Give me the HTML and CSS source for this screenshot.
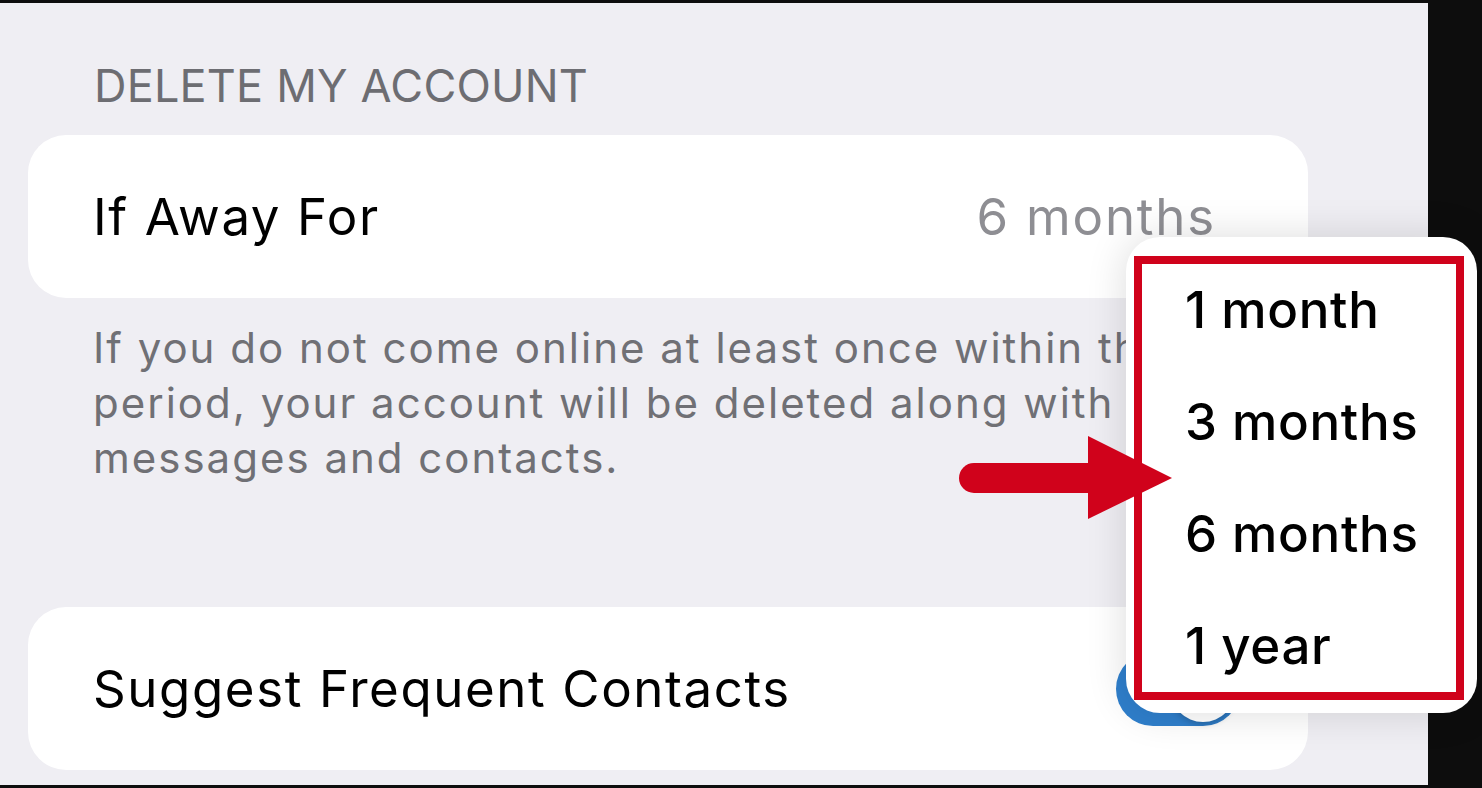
FILE: index.html
```html
<!DOCTYPE html>
<html lang="en">
<head>
    <meta charset="UTF-8">
    <title>Privacy and Security</title>
    <link rel="stylesheet" href="styles.css">
</head>
<body>
    <div class="screen">
        <main class="settings">
            <h2 class="section-title">DELETE MY ACCOUNT</h2>
            <div class="card">
                <div class="row">
                    <span class="row-label">If Away For</span>
                    <span class="row-value">6 months</span>
                </div>
            </div>
            <p class="section-note">If you do not come online at least once within this<br>period, your account will be deleted along with all<br>messages and contacts.</p>
            <div class="card card-spaced">
                <div class="row">
                    <span class="row-label">Suggest Frequent Contacts</span>
                    <span class="switch"><span class="knob"></span></span>
                </div>
            </div>
        </main>
        <div class="side-dark"></div>

        <div class="menu">
            <div class="menu-frame">
                <div class="menu-item">1 month</div>
                <div class="menu-item">3 months</div>
                <div class="menu-item">6 months</div>
                <div class="menu-item">1 year</div>
            </div>
        </div>

        <svg class="arrow" width="220" height="90" viewBox="0 0 220 90">
            <path d="M15 27 H131 V57 H15 A15 15 0 0 1 15 27 Z" fill="#d0021b"/>
            <polygon points="129,0 213,42 129,83" fill="#d0021b"/>
        </svg>
    </div>
</body>
</html>
```

FILE: styles.css
```css
body { margin: 0; background: #0d0d0d; font-family: "Inter", "Roboto", sans-serif; }
.screen { position: relative; display: flex; width: 1482px; height: 788px; overflow: hidden; }
.settings {
    width: 1428px;
    height: 782px;
    margin-top: 3px;
    padding: 60px 0 0 28px;
    box-sizing: border-box;
    background: #efeef3;
}
.side-dark { flex: 1; background: #0d0d0d; }

.section-title {
    margin: 0 0 27px 66px;
    font-size: 45px;
    line-height: 45px;
    font-weight: 400;
    letter-spacing: 0.2px;
    color: #6d6d72;
}
.card {
    width: 1280px;
    height: 163px;
    background: #fff;
    border-radius: 38px;
}
.card-spaced { margin-top: 122px; }
.row {
    height: 100%;
    display: flex;
    align-items: center;
    justify-content: space-between;
    padding: 0 68px 0 65px;
    box-sizing: border-box;
}
.row-label { font-size: 51px; line-height: 60px; letter-spacing: 1.6px; color: #000; }
.row-value { font-size: 51px; line-height: 60px; letter-spacing: 1.8px; color: #8e8e93; margin-right: 24px; }

.section-note {
    margin: 22px 0 0 65px;
    font-size: 42px;
    line-height: 55px;
    letter-spacing: 2px;
    white-space: nowrap;
    color: #707075;
}

.switch {
    position: relative;
    width: 124px;
    height: 74px;
    border-radius: 37px;
    background: #2f7fcc;
}
.knob {
    position: absolute;
    top: 4px;
    right: 4px;
    width: 66px;
    height: 66px;
    border-radius: 50%;
    background: #fff;
    box-shadow: 0 2px 6px rgba(0, 0, 0, 0.2);
}

.menu {
    position: absolute;
    left: 1126px;
    top: 237px;
    width: 351px;
    height: 476px;
    padding: 19px 13px 13px 8px;
    box-sizing: border-box;
    background: #fff;
    border-radius: 34px;
    box-shadow: 0 0 40px rgba(0, 0, 0, 0.14);
}
.menu-frame {
    height: 444px;
    border: 8px solid #d0021b;
    box-sizing: border-box;
    padding: 0 0 0 43px;
    display: flex;
    flex-direction: column;
    gap: 20px;
}
.menu-item {
    font-size: 51px;
    font-weight: 500;
    line-height: 92px;
    letter-spacing: 0.7px;
    color: #000;
}
.arrow { position: absolute; left: 959px; top: 436px; }
```
